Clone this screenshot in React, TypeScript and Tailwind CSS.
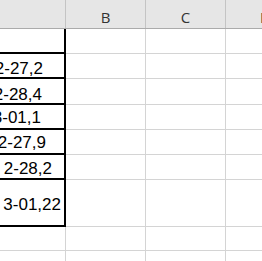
import React from "react";

const rows: { h: string; text: string; cls: string; boxed: boolean }[] = [
  { h: "h-[25px]", text: "", cls: "", boxed: true },
  { h: "h-[25px]", text: "2022-27,2", cls: "pr-[21px] pt-[7px]", boxed: true },
  { h: "h-[26px]", text: "2022-28,4", cls: "pr-[22px] pt-[7px]", boxed: true },
  { h: "h-[25px]", text: "2023-01,1", cls: "pr-[23px] pt-[3px]", boxed: true },
  { h: "h-[25px]", text: "2022-27,9", cls: "pr-[18px] pt-[2px]", boxed: true },
  { h: "h-[25px]", text: "2-28,2", cls: "pr-[12px] pt-[5px]", boxed: true },
  { h: "h-[47px]", text: "3-01,22", cls: "pr-[3px] pt-[4px]", boxed: true },
  { h: "h-[24px]", text: "", cls: "", boxed: false },
  { h: "h-[25px]", text: "", cls: "", boxed: false },
];

export default function App() {
  return (
    <div className="w-[262px] h-[261px] overflow-hidden bg-white">
      <div className="flex h-[29px] bg-[#e6e6e6] border-b border-[#ababab] text-[15px] text-[#333]" style={{ fontFamily: '"Open Sans", sans-serif' }}>
        <div className="w-[66px] shrink-0 border-r border-[#c4c4c4]" />
        <div className="w-[80px] shrink-0 border-r border-[#c4c4c4] flex items-center justify-center pt-[6px]">B</div>
        <div className="w-[80px] shrink-0 border-r border-[#c4c4c4] flex items-center justify-center pt-[6px]">C</div>
        <div className="w-[80px] shrink-0 border-r border-[#c4c4c4] flex items-center justify-center pt-[6px]">D</div>
      </div>
      {rows.map((r, i) => (
        <div key={i} className={`flex ${r.h}`}>
          <div
            className={
              r.boxed
                ? "w-[66px] shrink-0 border-r-2 border-b-2 border-black overflow-hidden flex items-center justify-end whitespace-nowrap text-[17px] text-black"
                : "w-[66px] shrink-0 border-r border-b border-[#d4d4d4]"
            }
            style={{ fontFamily: '"Liberation Sans", Arial, sans-serif' }}
          >
            {r.text ? <span className={`block ${r.cls}`}>{r.text}</span> : null}
          </div>
          <div className="w-[80px] shrink-0 border-r border-b border-[#d4d4d4]" />
          <div className="w-[80px] shrink-0 border-r border-b border-[#d4d4d4]" />
          <div className="w-[80px] shrink-0 border-r border-b border-[#d4d4d4]" />
        </div>
      ))}
    </div>
  );
}
